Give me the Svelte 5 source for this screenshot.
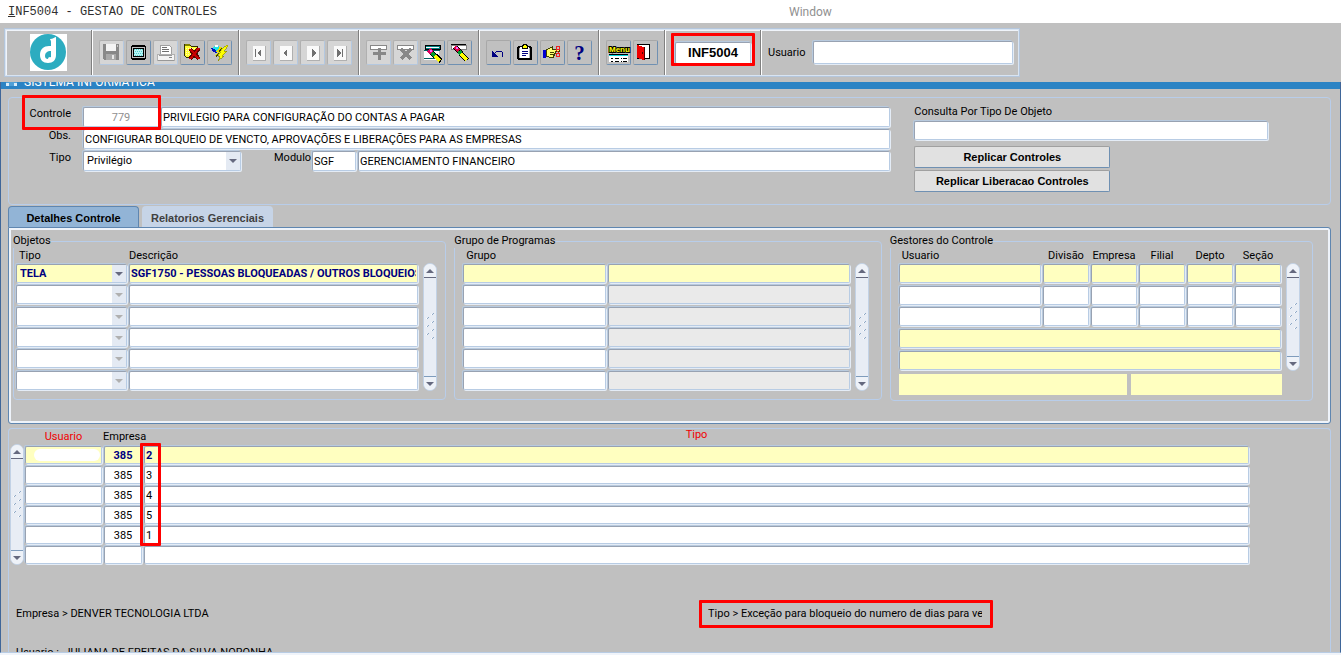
<script lang="ts">
  type Row = { usuario: string; empresa: string; tipo: string };

  const toolGroups = [
    [
      { id: 'save', label: 'Salvar', off: true },
      { id: 'screen', label: 'Tela' },
      { id: 'print', label: 'Imprimir', off: true },
      { id: 'clear', label: 'Limpar' },
      { id: 'run', label: 'Executar' },
    ],
    [
      { id: 'first', label: 'Primeiro', off: true },
      { id: 'prev', label: 'Anterior', off: true },
      { id: 'next', label: 'Proximo', off: true },
      { id: 'last', label: 'Ultimo', off: true },
    ],
    [
      { id: 'insert', label: 'Inserir', off: true },
      { id: 'remove', label: 'Remover', off: true },
      { id: 'query', label: 'Entrar consulta' },
      { id: 'search', label: 'Consultar' },
    ],
    [
      { id: 'undo', label: 'Desfazer' },
      { id: 'paste', label: 'Lista' },
      { id: 'hand', label: 'Editar' },
      { id: 'help', label: 'Ajuda' },
    ],
    [
      { id: 'menu', label: 'Menu' },
      { id: 'exit', label: 'Sair' },
    ],
  ];

  const objetos = [
    { tipo: 'TELA', descricao: 'SGF1750 - PESSOAS BLOQUEADAS / OUTROS BLOQUEIOS' },
    ...Array.from({ length: 5 }, () => ({ tipo: '', descricao: '' })),
  ];
  const gestorCols = ['Usuario', 'Divisão', 'Empresa', 'Filial', 'Depto', 'Seção'];

  const rows: Row[] = [
    ...['2', '3', '4', '5', '1'].map((tipo) => ({ usuario: '', empresa: '385', tipo })),
    { usuario: '', empresa: '', tipo: '' },
  ];
</script>

<svelte:head><title>INF5004 - GESTAO DE CONTROLES</title></svelte:head>

{#snippet icon(id: string)}
  <svg class="icon" viewBox="0 0 25 25" aria-hidden="true">
    {#if id === 'save'}
      <path d="M4 4h15l1 1v15H5l-1-1z" fill="#888" />
      <path d="M7 4h10v7H7z" fill="#f4f4f4" />
      <path d="M7 14h10v6H7z" fill="#a8a8a8" />
      <path d="M13 15h2v4h-2z" fill="#e8e8e8" />
      <path d="M18 5h1v2h-1z" fill="#c8c8c8" />
    {:else if id === 'screen'}
      <path d="M6 5h13v1h1v13h-1v1H6v-1H5V6h1z" fill="#000" />
      <path d="M6 7h13v11H6z" fill="#c0c0c0" />
      <path d="M7 8h11v9H7z" fill="#000" />
      <path d="M8 9h9v7H8z" fill="#b8f4f4" />
      <path d="M8 9h1v1H8zM10 9h1v1h-1zM12 9h1v1h-1zM14 9h1v1h-1zM16 9h1v1h-1zM9 11h1v1H9zM11 11h1v1h-1zM13 11h1v1h-1zM15 11h1v1h-1zM8 13h1v1H8zM10 13h1v1h-1zM12 13h1v1h-1zM14 13h1v1h-1zM16 13h1v1h-1zM9 15h1v1H9zM11 15h1v1h-1zM13 15h1v1h-1zM15 15h1v1h-1z" fill="#50d0d0" />
    {:else if id === 'print'}
      <path d="M7 5h9l2 2v7H7z" fill="#fff" stroke="#a0a0a0" />
      <path d="M9 7h5v1H9zM9 9h7v1H9zM9 11h7v1H9z" fill="#707070" />
      <path d="M4 14h17v6H4z" fill="#f4f4f4" stroke="#b0b0b0" />
      <path d="M6 15h13v1H6zM5 20h16v1H5z" fill="#989898" />
      <path d="M16 17h3v1h-3z" fill="#888" />
    {:else if id === 'clear'}
      <path d="M4 6l1-2h4l2 2h6v11H6l-2-2z" fill="#ffff30" stroke="#303000" />
      <path d="M6 8h10M6 10h10M6 12h10M6 14h8" stroke="#fffbc0" stroke-dasharray="1 1" />
      <path d="M5 4h5v2H5z" fill="#808000" />
      <path d="M10 9l9 10M19 8l-9 11" stroke="#600000" stroke-width="4" />
      <path d="M10 9l9 10M19 8l-9 11" stroke="#c80000" stroke-width="2" />
    {:else if id === 'run'}
      <path d="M4 9l4-4 2 0 3 3-3 3z" fill="#20e0e8" />
      <path d="M4 8l4 1 2 4-4-1z" fill="#0010c0" />
      <path d="M8 5h3v2H8z" fill="#fff" />
      <path d="M20 5l1 1-4 5h3l-5 5h2l-6 5 2-5h-2l3-5h-2z" fill="#ffff00" stroke="#808000" stroke-width=".6" />
      <path d="M14 7l-3 4h2l-4 5" fill="none" stroke="#e0e000" stroke-width="2" />
      <path d="M15 8l-3 4M12 13l-3 4" fill="none" stroke="#404000" />
    {:else if id === 'first' || id === 'prev' || id === 'next' || id === 'last'}
      <path d="M7 6h12v14H7z" fill="#fafafa" />
      <path d="M19 6v14H7" fill="none" stroke="#b0b0b0" />
      {#if id === 'first'}
        <path d="M15 9v8l-4-4zM9 9h1v8H9z" fill="#707070" />
      {:else if id === 'prev'}
        <path d="M14 9v8l-4-4z" fill="#707070" />
      {:else if id === 'next'}
        <path d="M12 9v8l4-4z" fill="#707070" />
      {:else}
        <path d="M10 9v8l4-4zM15 9h1v8h-1z" fill="#707070" />
      {/if}
    {:else if id === 'insert'}
      <path d="M4 5h16v4H4z" fill="#fff" stroke="#888" />
      <path d="M12 8h3v4h5v3h-5v5h-3v-5H7v-3h5z" fill="#888" />
    {:else if id === 'remove'}
      <path d="M4 5h16v4H4z" fill="#fff" stroke="#888" />
      <path d="M8 9l10 10M18 9L8 19" stroke="#888" stroke-width="3" />
    {:else if id === 'query'}
      <path d="M5 5h15v4H5z" fill="#008080" stroke="#000" />
      <path d="M6 7h13v1H6z" fill="#fff" />
      <path d="M4 11h15v5l-4 4H4z" fill="#fff" />
      <path d="M4 10h16v1H4zM4 18h11v1H4z" fill="#006060" />
      <path d="M10 11l11 10" stroke="#000" stroke-width="5" />
      <path d="M9 10l3 3" stroke="#e00060" stroke-width="5" />
      <path d="M12 13l3 3" stroke="#00a030" stroke-width="4" />
      <path d="M15 16l5 5" stroke="#ffff00" stroke-width="4" />
      <path d="M10 10h2v2h-2z" fill="#ff60ff" />
    {:else if id === 'search'}
      <path d="M4 5h15v4H4z" fill="#fff" stroke="#808080" />
      <path d="M4 4h15v1H4z" fill="#000" />
      <path d="M8 7l12 13" stroke="#000" stroke-width="5" />
      <path d="M8 7l4 4" stroke="#e00040" stroke-width="4" />
      <path d="M12 11l2 3" stroke="#00a030" stroke-width="4" />
      <path d="M14 14l6 6" stroke="#ffff00" stroke-width="4" />
      <path d="M9 7h2v2H9z" fill="#ff60ff" />
    {:else if id === 'undo'}
      <path d="M8 15c1-2 3-4 5-4 3 0 4 2 4 3 0 2-1 3-1 3" fill="none" stroke="#000080" />
      <path d="M6 11v6h6z" fill="#000080" />
    {:else if id === 'paste'}
      <path d="M5 6h13v1h1v13H5v-1H4V7h1z" fill="#000" />
      <path d="M6 8h11v10H6z" fill="#b0b0b0" />
      <path d="M7 7h9v11H7z" fill="#fff" />
      <path d="M9 5h1V4h3v1h1v3H9z" fill="#ffff00" stroke="#000" />
      <path d="M9 11h6v1H9zM9 13h6v1H9zM9 15h4v1H9z" fill="#000080" />
    {:else if id === 'hand'}
      <path d="M3 10h3v8H3z" fill="#0000d0" />
      <path d="M6 10l4-2 2-1v2h7v2h-4v2h-1v2h-1v2H9l-3-1z" fill="#ffff70" stroke="#404000" />
      <path d="M10 12h4M10 14h4" stroke="#404000" />
      <circle cx="18" cy="8" r="2" fill="none" stroke="#f02020" />
      <circle cx="18" cy="15" r="2" fill="none" stroke="#f02020" />
      <path d="M16 10l3 3" stroke="#f02020" />
    {:else if id === 'menu'}
      <text x="3" y="12" class="menu-text">Menu</text>
      <path d="M3 14h19v8H3z" fill="#fff" />
      <path d="M3 14h19v1H3z" fill="#000" />
      <path d="M3 15h19v1H3z" fill="#00d8e0" />
      <path d="M5 18h2v1H5zM9 18h4v1H9zM15 18h1v1h-1zM17 18h4v1h-4zM5 21h2v1H5zM9 21h4v1H9zM15 21h1v1h-1zM17 21h4v1h-4z" fill="#000" />
    {:else if id === 'exit'}
      <path d="M4 4h13v15H4z" fill="#000" />
      <path d="M5 5h11v13H5z" fill="#fff" />
      <path d="M4 5l7 2v13l-7-2z" fill="#f00000" />
      <path d="M11 7h1v13h-1zM9 12h1v2H9z" fill="#500000" />
    {/if}
  </svg>
{/snippet}

{#snippet scroller()}
  <div class="scroller">
    <button class="arrow up" aria-label="Rolar para cima"></button>
    <svg class="grip" viewBox="0 0 10 30" aria-hidden="true">
      {#each [[7, 1], [2, 5], [7, 9], [2, 13], [7, 17], [2, 21], [7, 25]] as [x, y]}
        <path d="M{x - 1} {y + 1}h2v1h-2z" fill="#fff" />
        <path d="M{x} {y + 1}h1v1h-1zM{x + 1} {y}h1v1h-1z" fill="#8fa9c6" />
      {/each}
    </svg>
    <button class="arrow down" aria-label="Rolar para baixo"></button>
  </div>
{/snippet}

<div class="app">
  <nav class="menubar">
    <a class="menu-title" href="#inf5004"><u>I</u>NF5004 - GESTAO DE CONTROLES</a>
    <a class="menu-window" href="#window">Window</a>
  </nav>

  <header class="toolbar">
    <div class="frame">
      <div class="logo">
        <svg viewBox="0 0 37 37" role="img" aria-label="Logo">
          <rect width="37" height="37" fill="#fff" />
          <circle cx="18" cy="18" r="18" fill="#2cacc0" />
          <path d="M20 5c3 0 5-2 6-2v18c0 5-3 8-8 8s-8-3-8-8c0-6 4-9 9-9h2V8c0-2-1-2-1-3z" fill="#fff" />
          <path d="M21 17c-4 0-6 2-6 5 0 2 1 3 3 3 1 0 1-1 3-1z" fill="#2cacc0" />
          <circle cx="20" cy="25" r="2" fill="#fff" />
        </svg>
      </div>
      {#each toolGroups as group}
        <div class="group">
          {#each group as tool (tool.id)}
            <button class="tool" class:off={tool.off} aria-label={tool.label}>
              {#if tool.id === 'help'}<span class="help">?</span>{:else}{@render icon(tool.id)}{/if}
            </button>
          {/each}
        </div>
      {/each}
      <div class="group code">
        <input class="field" value="INF5004" aria-label="Programa" />
        <span class="mark"></span>
      </div>
      <div class="group user">
        <label for="usuario">Usuario</label>
        <input id="usuario" class="field" />
      </div>
    </div>
  </header>

  <main class="window">
    <div class="titlebar"><span class="app-icon"></span><span class="caption">SISTEMA INFORMATICA</span></div>

    <div class="content">
      <section class="control">
        <div class="form">
          <div class="line">
            <label for="controle">Controle</label>
            <input id="controle" class="field num" value="779" disabled />
            <input class="field grow" value="PRIVILEGIO PARA CONFIGURAÇÃO DO CONTAS A PAGAR" aria-label="Nome do controle" />
            <span class="mark"></span>
          </div>
          <div class="line">
            <label for="obs">Obs.</label>
            <input id="obs" class="field grow" value="CONFIGURAR BOLQUEIO DE VENCTO, APROVAÇÕES E LIBERAÇÕES PARA AS EMPRESAS" />
          </div>
          <div class="line">
            <label for="tipo">Tipo</label>
            <span class="combo tipo">
              <select id="tipo" class="field"><option>Privilégio</option></select>
            </span>
            <label class="modulo" for="modulo">Modulo</label>
            <input id="modulo" class="field sigla" value="SGF" />
            <input class="field grow" value="GERENCIAMENTO FINANCEIRO" aria-label="Nome do modulo" />
          </div>
        </div>
        <div class="side">
          <label for="consulta">Consulta Por Tipo De Objeto</label>
          <input id="consulta" class="field" />
          <button class="action">Replicar Controles</button>
          <button class="action">Replicar Liberacao Controles</button>
        </div>
      </section>

      <div class="tabs" role="tablist">
        <button class="tab active" role="tab" aria-selected="true">Detalhes Controle</button>
        <button class="tab" role="tab" aria-selected="false">Relatorios Gerenciais</button>
      </div>

      <section class="details">
        <fieldset class="objetos">
          <legend>Objetos</legend>
          <div class="block">
            <table>
              <thead>
                <tr><th class="c-tipo">Tipo</th><th>Descrição</th></tr>
              </thead>
              <tbody>
                {#each objetos as o, i}
                  <tr class:current={i === 0}>
                    <td>
                      <span class="combo" class:idle={i > 0}>
                        <select class="field" aria-label="Tipo"><option>{o.tipo}</option></select>
                      </span>
                    </td>
                    <td><input class="field" value={o.descricao} aria-label="Descrição" /></td>
                  </tr>
                {/each}
              </tbody>
            </table>
            {@render scroller()}
          </div>
        </fieldset>

        <fieldset class="programas">
          <legend>Grupo de Programas</legend>
          <div class="block">
            <table>
              <thead>
                <tr><th class="c-wide">Grupo</th><th></th></tr>
              </thead>
              <tbody>
                {#each Array(6) as _, i}
                  <tr class:current={i === 0}>
                    <td><input class="field" aria-label="Grupo" /></td>
                    <td><input class="field locked" aria-label="Nome do grupo" readonly /></td>
                  </tr>
                {/each}
              </tbody>
            </table>
            {@render scroller()}
          </div>
        </fieldset>

        <fieldset class="gestores">
          <legend>Gestores do Controle</legend>
          <div class="block short">
            <table>
              <thead>
                <tr>
                  {#each gestorCols as col, i}
                    <th class={i === 0 ? '' : 'c-small'}>{col}</th>
                  {/each}
                </tr>
              </thead>
              <tbody>
                {#each Array(3) as _, i}
                  <tr class:current={i === 0}>
                    {#each gestorCols as col}
                      <td><input class="field" aria-label={col} /></td>
                    {/each}
                  </tr>
                {/each}
                {#each ['Nome do usuario', 'Nome da divisão'] as name}
                  <tr class="current">
                    <td colspan="6"><input class="field" aria-label={name} readonly /></td>
                  </tr>
                {/each}
              </tbody>
            </table>
            {@render scroller()}
          </div>
          <div class="totals"><output></output><output></output></div>
        </fieldset>
      </section>

      <section class="users">
        <div class="block">
          {@render scroller()}
          <table>
            <thead>
              <tr>
                <th class="c-user req">Usuario</th>
                <th class="c-emp">Empresa</th>
                <th class="c-kind req">Tipo</th>
              </tr>
            </thead>
            <tbody>
              {#each rows as r, i}
                <tr class:current={i === 0}>
                  <td class="who">
                    <input class="field" value={r.usuario} aria-label="Usuario" />
                    {#if i === 0}<span class="blot"></span>{/if}
                  </td>
                  <td><input class="field emp" value={r.empresa} aria-label="Empresa" /></td>
                  <td class="kind">
                    <input class="field" value={r.tipo} aria-label="Tipo" />
                    {#if i === 0}<span class="mark"></span>{/if}
                  </td>
                </tr>
              {/each}
            </tbody>
          </table>
        </div>

        <div class="info">
          <p>Empresa &gt; DENVER TECNOLOGIA LTDA</p>
          <p class="boxed"><span>Tipo &gt; Exceção para bloqueio do numero de dias para vencimento</span></p>
          <p>Usuario : &nbsp;JULIANA DE FREITAS DA SILVA NORONHA</p>
        </div>
      </section>
    </div>
  </main>
</div>

<style>
  :global(body) {
    background: #c0c0c0;
  }

  .app {
    height: 100vh;
    display: flex;
    flex-direction: column;
    overflow: hidden;
    background: #c0c0c0;
    color: #000;
    font: 11px/14px Roboto, "Liberation Sans", Arial, sans-serif;
  }

  .app *,
  .app *::after {
    box-sizing: border-box;
  }

  input,
  select,
  button {
    font: inherit;
    color: inherit;
    margin: 0;
  }

  .mark {
    position: absolute;
    border: 3px solid #ff0000;
    border-radius: 1px;
    pointer-events: none;
  }

  /* menu bar */
  .menubar {
    display: grid;
    grid-template-columns: 781fr 552fr;
    align-items: center;
    height: 23px;
    flex: none;
    padding-left: 8px;
    background: #fff;
  }

  .menubar a {
    text-decoration: none;
  }

  .menu-title {
    color: #303030;
    font: 12px/16px "Liberation Mono", "Courier New", monospace;
  }

  .menu-window {
    font-size: 12px;
    color: #909090;
  }

  /* toolbar */
  .toolbar {
    flex: none;
    display: flex;
    height: 59px;
    padding: 6px 5px;
  }

  .frame {
    display: flex;
    border: 1px solid #d8e4f2;
    box-shadow: inset 1px 1px 0 #f0f4fa, 0 0 0 1px #b4c6dc;
  }

  .logo {
    width: 85px;
    display: grid;
    place-items: center;
  }

  .logo svg {
    width: 37px;
    height: 37px;
  }

  .group {
    position: relative;
    display: flex;
    align-items: center;
    gap: 2px;
    padding: 0 6px 0 7px;
    border-left: 1px solid #808080;
    box-shadow: inset 1px 0 0 #fff;
  }

  .tool {
    width: 25px;
    height: 25px;
    padding: 0;
    display: grid;
    place-items: center;
    background: none;
    border: 1px solid;
    border-color: #a8a8a8 #6f90b2 #6f90b2 #a8a8a8;
    border-radius: 2px;
  }

  .tool.off {
    background: #d6d6d6;
    border-color: #b0b0b0 #b4c8e0 #b4c8e0 #b0b0b0;
  }

  .icon {
    width: 25px;
    height: 25px;
    margin: -1px;
    shape-rendering: crispEdges;
  }

  .menu-text {
    font: bold 8px "Liberation Sans", Arial, sans-serif;
    fill: #ffff00;
    stroke: #000;
    stroke-width: 2px;
    paint-order: stroke;
  }

  .help {
    font: bold 21px/22px "Liberation Serif", serif;
    color: #000080;
  }

  .code {
    padding: 0 9px 0 10px;
  }

  .code .field {
    width: 76px;
    height: 22px;
    text-align: center;
    font: bold 13px/20px "Liberation Sans", Arial, sans-serif;
  }

  .code .mark {
    inset: 3px 5px 9px 6px;
  }

  .user {
    gap: 7px;
    padding-right: 5px;
  }

  .user .field {
    width: 200px;
    height: 23px;
  }

  /* fields */
  .field {
    display: block;
    min-width: 0;
    padding: 0 1px;
    background: #fff;
    border: 1px solid;
    border-color: #98a2b2 #b8cce4 #b8cce4 #98a2b2;
    border-radius: 2px;
    box-shadow: 1px 1px 0 #e4ecf6, -1px -1px 0 #b8cade;
    outline: none;
  }

  .combo {
    position: relative;
    display: block;
  }

  .combo .field {
    width: 100%;
    padding: 0 3px;
    appearance: none;
  }

  .combo::before {
    content: "";
    position: absolute;
    z-index: 1;
    top: 1px;
    right: 1px;
    bottom: 1px;
    width: 14px;
    background: #e4eaf3;
    pointer-events: none;
  }

  .combo::after {
    content: "";
    position: absolute;
    z-index: 2;
    top: 8px;
    right: 4px;
    border: 4px solid transparent;
    border-top-color: #65697f;
    border-bottom: 0;
    pointer-events: none;
  }

  .combo.idle::after {
    border-top-color: #b0b0b0;
  }

  /* window */
  .window {
    flex: 1;
    min-height: 0;
    margin-bottom: 2px;
    overflow: hidden;
    border: 1px solid #3f6699;
    border-top: 0;
    border-bottom: 1px solid #b8cce4;
    box-shadow: 0 2px 0 #f0f4fa;
  }

  .titlebar {
    display: flex;
    align-items: flex-end;
    gap: 7px;
    height: 7px;
    padding: 0 5px 3px;
    overflow: hidden;
    background: #2b83c4;
    color: #fff;
    font-size: 12px;
  }

  .app-icon {
    width: 11px;
    height: 10px;
    border: 3px dotted #d8ecfa;
    background: #4fa0d8;
  }

  .caption {
    height: 11px;
    line-height: 14px;
  }

  .content {
    padding: 8px 9px 0 7px;
  }

  .control {
    display: grid;
    grid-template-columns: 882fr 416fr;
    gap: 24px;
    padding: 9px 0 12px;
    border: 1px solid #b8cdea;
    border-radius: 4px;
  }

  .form {
    display: grid;
    align-content: start;
    gap: 2px;
  }

  .line {
    position: relative;
    display: flex;
    align-items: flex-start;
    gap: 2px;
  }

  .line .field {
    height: 20px;
  }

  .line > label:first-child {
    width: 72px;
    padding-right: 10px;
    text-align: right;
  }

  .grow {
    flex: 1;
  }

  .line .num {
    width: 76px;
    text-align: center;
    color: #909090;
  }

  .line .mark {
    z-index: 1;
    left: 13px;
    top: -12px;
    width: 139px;
    height: 35px;
  }

  .tipo {
    width: 158px;
  }

  .line .modulo {
    width: 36px;
    margin-left: 31px;
  }

  .line .sigla {
    width: 44px;
  }

  .side {
    display: grid;
    align-content: start;
    justify-items: start;
    gap: 2px;
  }

  .side label {
    margin-top: -2px;
  }

  .side .field {
    width: 85%;
    height: 19px;
    margin-bottom: 4px;
  }

  .action,
  .tab {
    font-family: "Liberation Sans", Arial, sans-serif;
    font-weight: bold;
  }

  .action {
    width: 196px;
    height: 22px;
    padding: 0;
    background: #e1e1e1;
    border: 1px solid;
    border-color: #a0a0a0 #6f90b2 #6f90b2 #a0a0a0;
    border-radius: 2px;
  }

  /* tabs */
  .tabs {
    display: flex;
    gap: 3px;
    height: 21px;
    margin-top: 1px;
  }

  .tab {
    min-width: 131px;
    padding: 2px 5px 0;
    color: #404040;
    background: #c6d4e7;
    border: 0;
    border-radius: 4px 4px 0 0;
  }

  .tab.active {
    color: #000;
    background: #92b4d6;
    border: 1px solid #5f86b0;
    border-bottom: 0;
  }

  .details {
    display: grid;
    grid-template-columns: 433fr 427fr 423fr;
    align-items: start;
    gap: 8px;
    padding: 6px 17px 22px 4px;
    border: 1px solid #5f86b0;
    border-radius: 0 3px 3px 3px;
    box-shadow: inset 0 0 0 2px #eef3fa;
  }

  fieldset {
    min-width: 0;
    margin: 0;
    padding: 0;
    border: 1px solid #b8cdea;
    border-radius: 4px;
  }

  legend {
    padding: 0;
    margin-left: -1px;
  }

  .objetos {
    padding-bottom: 8px;
  }

  .objetos .block {
    padding: 0 8px 0 1px;
  }

  .programas {
    padding-bottom: 8px;
  }

  .programas .block {
    padding: 0 12px 0 7px;
  }

  .gestores {
    padding-bottom: 5px;
  }

  .gestores .block {
    padding: 0 12px 0 7px;
  }

  .block {
    display: flex;
    gap: 4px;
    height: 143px;
  }

  .gestores .short {
    height: 123px;
  }

  table {
    flex: 1;
    width: 100%;
    min-width: 0;
    height: 100%;
    table-layout: fixed;
    border-spacing: 0;
  }

  th {
    height: 15px;
    padding: 0 4px;
    font-weight: normal;
    text-align: left;
    white-space: nowrap;
  }

  td {
    padding: 1px;
  }

  td .field {
    width: 100%;
    height: 19px;
  }

  .c-tipo {
    width: 113px;
  }

  .objetos th + th {
    padding-left: 1px;
  }

  .c-wide {
    width: 145px;
  }

  .c-small {
    width: 48px;
    padding: 0;
    text-align: center;
  }

  .locked {
    background: #eaeaea;
  }

  .current .field {
    background: #ffffc0;
    color: #000080;
    font-weight: bold;
  }

  .totals {
    display: grid;
    grid-template-columns: 229fr 152fr;
    gap: 4px;
    margin: 3px 30px 0 8px;
  }

  output {
    height: 21px;
    background: #ffffc0;
  }

  /* scroll bars */
  .scroller {
    flex: none;
    display: flex;
    flex-direction: column;
    align-items: center;
    justify-content: space-between;
    width: 14px;
    margin-top: 15px;
    overflow: hidden;
    background: #e8edf5;
    border: 1px solid #c2d2e6;
    border-radius: 7px;
  }

  .arrow {
    width: 12px;
    height: 14px;
    padding: 0;
    display: grid;
    place-items: center;
    background: #eef2f8;
    border: 0;
  }

  .arrow::after {
    content: "";
    border: 4px solid transparent;
  }

  .up {
    border-bottom: 1px solid #65697f;
  }

  .up::after {
    border-bottom-color: #65697f;
    border-top: 0;
  }

  .down {
    border-top: 1px solid #7f9cbc;
  }

  .down::after {
    border-top-color: #65697f;
    border-bottom: 0;
  }

  .grip {
    width: 10px;
    height: 30px;
    shape-rendering: crispEdges;
  }

  /* users by company */
  .users {
    margin-top: 4px;
    padding: 0 80px 40px 1px;
    border: 1px solid #b8cdea;
    border-bottom: 0;
    border-radius: 4px 4px 0 0;
  }

  .users .block {
    gap: 0;
    height: 136px;
  }

  .users th {
    height: 16px;
    padding: 0;
    line-height: 12px;
  }

  .users td .field {
    height: 18px;
  }

  .users .c-user {
    width: 79px;
    text-align: center;
  }

  .c-emp {
    width: 40px;
    overflow: visible;
  }

  .users .c-kind {
    padding-bottom: 4px;
    text-align: center;
  }

  .req {
    color: #f00000;
  }

  .who,
  .kind {
    position: relative;
  }

  .blot {
    position: absolute;
    inset: 4px 3px 4px 10px;
    border-radius: 6px;
    background: #fff;
  }

  td .emp {
    text-align: center;
  }

  .kind .mark {
    z-index: 1;
    left: -3px;
    top: -2px;
    width: 21px;
    height: 103px;
  }

  .info {
    display: grid;
    grid-template-columns: 689px 294px;
    align-items: center;
    row-gap: 18px;
    padding-top: 35px;
  }

  .info p {
    margin: 0;
    padding-left: 6px;
    white-space: nowrap;
  }

  .info .boxed {
    padding: 4px 8px 4px 6px;
    border: 3px solid #ff0000;
    border-radius: 1px;
  }

  .boxed span {
    display: block;
    overflow: hidden;
  }
</style>
